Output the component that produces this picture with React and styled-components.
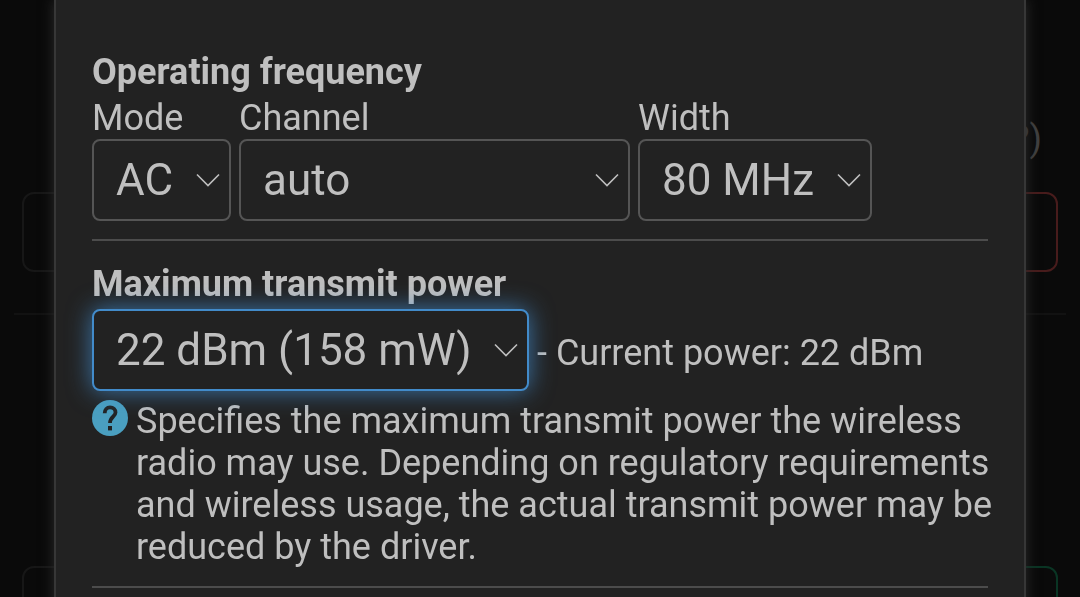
import React, {useState} from "react";
import styled, {createGlobalStyle} from "styled-components";

const GlobalStyle = createGlobalStyle`
    * {
        box-sizing: border-box;
    }

    body {
        margin: 0;
        background: #0a0a0a;
        color: #bfbfbf;
        font-family: Roboto, "Liberation Sans", sans-serif;
        font-size: 36px;
        line-height: 42px;
        overflow: hidden;
        -webkit-font-smoothing: antialiased;
    }
`;

const Page = styled.div`
    height: 100vh;
    overflow: hidden;
    padding: 0 14px;
`;

const PageRow = styled.div`
    padding: 0 8px 41px;
    border-bottom: 2px solid #121212;
`;

const StatusLine = styled.div`
    height: 192px;
    padding: 118px 16px 0 0;
    text-align: right;
    color: #404040;
`;

const PageCell = styled.div`
    height: 80px;
    display: flex;
    justify-content: space-between;
`;

const NextRow = styled(PageRow)`
    padding-top: 251px;
`;

const PageButton = styled.button`
    width: 160px;
    height: 80px;
    border: 2px solid ${({color}) => color};
    border-radius: 12px;
    background: transparent;
`;

const Modal = styled.div`
    position: fixed;
    top: 0;
    left: 5%;
    right: 5%;
    min-height: 100vh;
    padding: 51px 36px 0;
    border: solid #373737;
    border-width: 0 2px;
    background: #222222;
    box-shadow: 0 0 12px #2c2c2c;
`;

const Section = styled.section`
    display: flex;
    flex-direction: column;
    padding-bottom: 18px;
    margin-bottom: 22px;
    border-bottom: 2px solid #4c4c4c;
`;

const Title = styled.label`
    font-weight: bold;
`;

const Heading = styled.h3`
    margin: 0 0 4px;
    font-size: inherit;
    font-weight: bold;
`;

const Fields = styled.div`
    display: flex;
    gap: 8px;
`;

const Field = styled.div`
    width: ${({width}) => width}px;
    display: flex;
    flex-direction: column;
`;

const SelectWrap = styled.div`
    position: relative;
    width: ${({width}) => width ? `${width}px` : "100%"};
`;

const Select = styled.select`
    display: block;
    width: 100%;
    height: 82px;
    padding: 0 22px;
    appearance: none;
    outline: none;
    border: 2px solid ${({$active}) => $active ? "#428bca" : "#555555"};
    border-radius: 8px;
    background: #222222;
    box-shadow: ${({$active}) => $active ? "0 0 24px rgba(66, 139, 202, 0.8)" : "none"};
    color: inherit;
    font-family: inherit;
    font-size: 44px;
`;

const Arrow = styled.svg`
    position: absolute;
    top: 34px;
    right: 11px;
    width: 24px;
    height: 14px;
    fill: none;
    stroke: #bfbfbf;
    stroke-width: 1.6;
    pointer-events: none;
`;

const PowerLine = styled.div`
    display: flex;
    align-items: baseline;
    gap: 8px;
    margin-top: 4px;
`;

const Help = styled.div`
    display: flex;
    gap: 8px;
    margin: 9px -8px 0 0;
`;

const HelpIcon = styled.svg`
    flex: none;
    width: 36px;
    height: 36px;
`;

const Dropdown = ({id, width, active, options}) => {
    const [value, setValue] = useState(options[0]);

    return (
        <SelectWrap width={width}>
            <Select
                id={id}
                $active={active}
                value={value}
                onChange={(e) => setValue(e.target.value)}
            >
                {options.map((option) => <option key={option}>{option}</option>)}
            </Select>
            <Arrow viewBox="0 0 24 14">
                <path d="M1 1.5 L12 12.5 L23 1.5" />
            </Arrow>
        </SelectWrap>
    )
}

export default () => {
    return (
        <>
            <GlobalStyle />
            <Page>
                <PageRow>
                    <StatusLine>?)</StatusLine>
                    <PageCell>
                        <PageButton color="#171717" aria-label="Restart" />
                        <PageButton color="#481c1c" aria-label="Disable" />
                    </PageCell>
                </PageRow>
                <NextRow>
                    <PageCell>
                        <PageButton color="#171717" aria-label="Scan" />
                        <PageButton color="#0a3524" aria-label="Add" />
                    </PageCell>
                </NextRow>
            </Page>
            <Modal role="dialog">
                <Section>
                    <Heading>Operating frequency</Heading>
                    <Fields>
                        <Field width={139}>
                            <label htmlFor="mode">Mode</label>
                            <Dropdown id="mode" options={["AC", "N", "Legacy"]} />
                        </Field>
                        <Field width={391}>
                            <label htmlFor="channel">Channel</label>
                            <Dropdown id="channel" options={["auto"]} />
                        </Field>
                        <Field width={234}>
                            <label htmlFor="width">Width</label>
                            <Dropdown id="width" options={["80 MHz", "40 MHz", "20 MHz"]} />
                        </Field>
                    </Fields>
                </Section>
                <Section>
                    <Title htmlFor="power">Maximum transmit power</Title>
                    <PowerLine>
                        <Dropdown id="power" width={437} active options={["22 dBm (158 mW)"]} />
                        <span>- Current power: 22 dBm</span>
                    </PowerLine>
                    <Help>
                        <HelpIcon viewBox="0 0 36 36">
                            <circle cx="18" cy="18" r="18" fill="#4a9fc0" />
                            <path
                                d="M12.7 13.2 C12.7 9.6 14.9 7.4 18 7.4 C21.4 7.4 23.5 9.6 23.5 12.4 C23.5 16.6 18 17 18 23"
                                fill="none"
                                stroke="#222222"
                                strokeWidth="3.8"
                            />
                            <rect x="16" y="26" width="4" height="4.4" fill="#222222" />
                        </HelpIcon>
                        <span>
                            Specifies the maximum transmit power the wireless radio may use. Depending on
                            regulatory requirements and wireless usage, the actual transmit power may be
                            reduced by the driver.
                        </span>
                    </Help>
                </Section>
            </Modal>
        </>
    )
}
